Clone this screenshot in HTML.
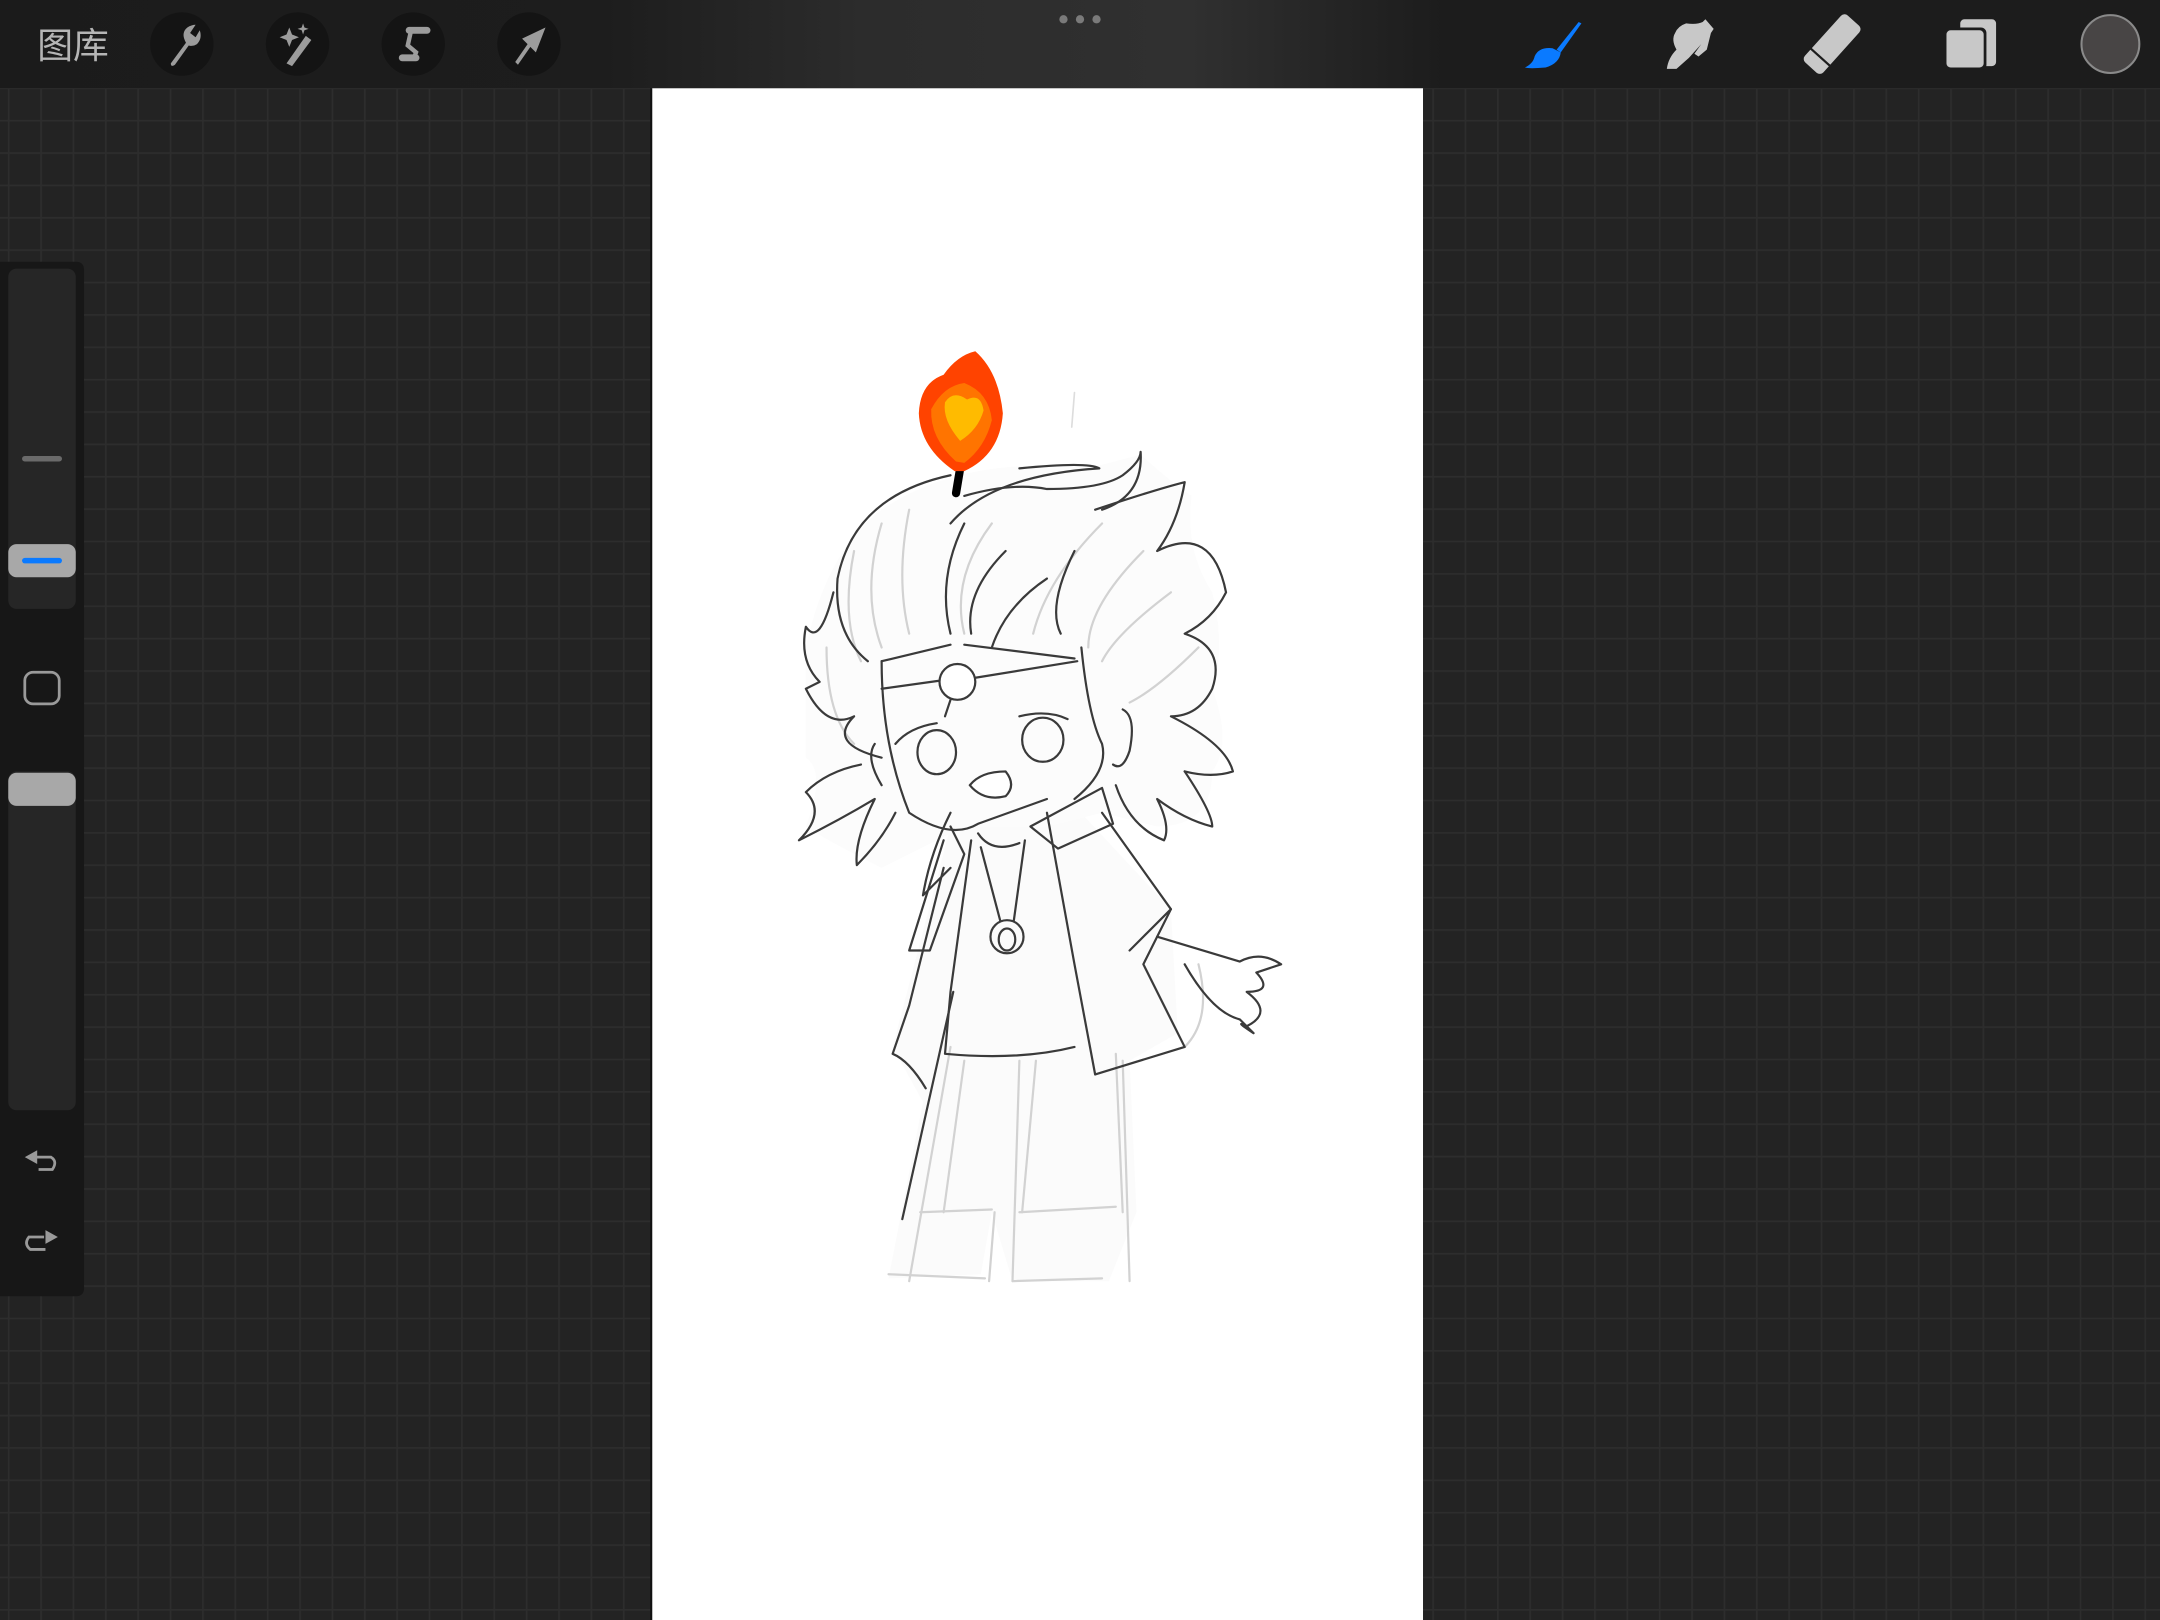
<!DOCTYPE html>
<html><head><meta charset="utf-8"><style>
html,body{margin:0;padding:0;background:#232323;width:2160px;height:1620px;overflow:hidden}
svg{display:block}
</style></head><body>
<svg width="2160" height="1620" viewBox="0 0 1568 1176" xmlns="http://www.w3.org/2000/svg">
<defs>
<pattern id="g" width="23.5" height="23.5" patternUnits="userSpaceOnUse" x="5.7" y="16.5">
<rect width="23.5" height="23.5" fill="#232323"/>
<rect width="1.2" height="23.5" fill="#2d2d2d"/>
<rect width="23.5" height="1.2" fill="#2d2d2d"/>
</pattern>
<linearGradient id="tb" x1="0" x2="1" y1="0" y2="0">
<stop offset="0" stop-color="#1b1b1b"/>
<stop offset="0.28" stop-color="#1d1d1d"/>
<stop offset="0.4" stop-color="#2c2c2c"/>
<stop offset="0.55" stop-color="#303030"/>
<stop offset="0.67" stop-color="#1c1c1c"/>
<stop offset="1" stop-color="#1c1c1c"/>
</linearGradient>
</defs>
<rect width="1568" height="1176" fill="url(#g)"/>
<rect x="473" y="64" width="560" height="1112" fill="#ffffff"/>
<rect x="472" y="64" width="1.5" height="1112" fill="#111"/>

<g fill="none" stroke-linecap="round" stroke-linejoin="round">
<path d="M700 595 L780 585 L850 660 L855 750 L820 770 L825 880 L805 930 L735 930 L720 880 L712 925 L645 928 L670 800 L648 760 L690 600Z" fill="#fbfbfb" stroke="none"/>
<path d="M585 470 Q600 400 640 370 Q700 330 790 340 L828 330 Q850 350 865 360 Q860 400 880 430 Q890 470 880 500 Q895 540 880 560 Q880 600 840 600 L800 590 L760 600 L700 600 L640 630 Q600 610 585 600 Q600 560 585 550Z" fill="#fcfcfc" stroke="none"/>
<g stroke="#d2d2d2" stroke-width="1.6">
<path d="M690 760 L660 930 M722 880 L718 930 M740 770 L735 930 M815 770 L820 930"/>
<path d="M668 880 L720 878 M740 880 L810 876 M645 925 L715 928 M735 930 L800 928"/>
<path d="M700 770 L685 880 M752 770 L742 880 M810 765 L815 880"/>
<path d="M870 700 Q880 740 860 760"/>
<path d="M620 400 Q610 450 625 480 M640 380 Q625 430 640 470 M660 370 Q650 420 660 460 M720 380 Q690 420 700 460 M800 380 Q760 420 750 460 M830 400 Q790 440 790 470 M850 430 Q810 460 800 480 M600 470 Q600 520 620 540 M870 470 Q840 500 820 510"/>
</g>
<g stroke="#3a3a3a" stroke-width="1.6">
<path d="M740 340 Q790 335 798 340 Q720 345 690 380"/>
<path d="M690 345 Q620 360 608 420 Q605 460 630 480"/>
<path d="M700 360 Q735 350 760 355 Q800 355 815 345 Q828 335 828 328 Q830 360 800 370"/>
<path d="M795 370 Q840 355 860 350 Q855 380 840 400 Q880 380 890 430 Q880 450 860 460 Q890 470 880 500 Q870 520 850 520 Q890 540 895 560 Q880 565 860 560"/>
<path d="M860 560 Q880 590 880 600 Q860 595 840 580 Q850 600 845 610 Q820 600 810 570"/>
<path d="M605 430 Q595 470 585 455 Q580 480 595 495 Q585 500 585 500 Q600 530 620 520 Q600 540 640 550"/>
<path d="M625 555 Q600 560 585 575 Q600 590 580 610 Q610 595 635 580 Q620 610 622 628 Q640 610 650 590"/>
<path d="M690 590 Q675 620 670 650 Q680 640 690 630"/>
<path d="M700 380 Q680 420 690 460 M730 400 Q700 430 705 460 M760 420 Q730 440 720 470 M780 400 Q760 440 770 460"/>
<path d="M640 480 Q640 540 660 590 Q690 610 710 598 L760 580"/>
<path d="M640 480 L690 468 M700 468 L780 478 M640 500 L683 494 M708 492 L782 480"/>
<path d="M785 470 Q790 520 800 540 Q805 560 780 580"/>
<circle cx="695" cy="495" r="13" fill="#fff"/>
<path d="M690 508 L686 520"/>
<ellipse cx="680" cy="546" rx="14" ry="16"/>
<ellipse cx="757" cy="537" rx="15" ry="16"/>
<path d="M650 540 Q660 528 680 525 M740 520 Q760 515 775 522"/>
<path d="M704 570 Q712 560 730 560 Q738 570 730 578 Q714 582 704 570Z" fill="#fff"/>
<path d="M815 515 Q825 520 820 545 Q815 560 808 555"/>
<path d="M635 540 Q628 550 640 570"/>
<path d="M748 600 L800 572 L808 598 L768 616Z"/>
<path d="M690 600 L700 620 L675 690 L660 690 L685 610"/>
<path d="M705 610 L690 720 L686 765 Q740 770 780 760"/>
<path d="M760 590 L780 700 L795 780 L860 760 L830 700 L850 660 L800 590"/>
<path d="M685 630 L660 730 L648 765 Q660 770 672 790"/>
<path d="M850 660 L820 690 M840 680 L900 698 Q915 690 930 700 L912 706 Q925 720 905 720 Q925 735 905 745 Q895 740 910 750 L900 740 Q880 735 860 700"/>
<path d="M710 605 Q720 620 740 612"/>
<path d="M712 615 L726 668 M744 610 L736 668"/>
<circle cx="731" cy="680" r="12"/>
<ellipse cx="731" cy="682" rx="6" ry="8"/>
<path d="M692 720 L655 885"/>
</g>
<path d="M780 285 L778 310" stroke="#ddd" stroke-width="1.2"/>
<path d="M697 340 L694 358" stroke="#000" stroke-width="6"/>
<path d="M693 342 Q668 325 667 300 Q668 278 685 272 Q695 258 708 255 Q725 270 728 300 Q726 330 700 342Z" fill="#ff4300"/>
<path d="M694 335 Q675 318 676 297 Q685 280 700 278 Q718 285 720 305 Q715 325 700 336Z" fill="#ff7400"/>
<path d="M697 320 Q684 305 686 292 Q692 283 702 290 Q712 285 714 298 Q710 312 697 320Z" fill="#ffbb00"/>
</g>

<rect width="1568" height="64" fill="url(#tb)"/>
<text x="27" y="42" font-family="Liberation Sans, Noto Sans CJK SC, sans-serif" font-size="26" fill="#b5b5b5">图库</text>
<g fill="#141414">
<ellipse cx="132" cy="32" rx="23" ry="23"/>
<ellipse cx="216" cy="32" rx="23" ry="23"/>
<ellipse cx="300" cy="32" rx="23" ry="23"/>
<ellipse cx="384" cy="32" rx="23" ry="23"/>
</g>
<g fill="#9c9c9c" stroke="none">
<path d="M124 46 L135 31 Q131 24 136 20 Q139 18 142 18 L138 24 L142 27 L145 22 Q147 28 143 32 Q140 34 137 33 L127 47 Q124 49 124 46Z"/>
<path d="M208 46 L222 26 L226 29 L212 48Z"/>
<path d="M210 20 L212 25 L217 27 L212 29 L210 34 L208 29 L203 27 L208 25Z"/>
<path d="M220 17 L221 20 L224 21 L221 22 L220 25 L219 22 L216 21 L219 20Z"/>
<path d="M396 20 L389 38 L385 34 L376 47 L374 45 L383 32 L379 28Z"/>
</g>
<g fill="none" stroke="#9c9c9c" stroke-linecap="round">
<path d="M297 22 L310 22" stroke-width="5"/>
<path d="M298 24 L296 33 L302 38 L301 41" stroke-width="3.2"/>
<path d="M292 42 L302 42" stroke-width="5"/>
</g>
<g fill="#7a7a7a">
<circle cx="772" cy="14" r="3"/><circle cx="784" cy="14" r="3"/><circle cx="796" cy="14" r="3"/>
</g>
<path d="M1130 36 L1146 16 L1148 17 L1133 38Z" fill="#0a7aff"/>
<path d="M1133 38 Q1132 46 1122 49 Q1110 50 1107 49 Q1113 46 1114 41 Q1117 34 1127 35Z" fill="#0a7aff"/>
<path d="M1224 17 Q1232 18 1236 16 L1238 14 L1244 21 L1242 24 L1239 36 L1233 41 L1230 39 L1235 32 L1226 42 L1217 50 L1210 50 Q1211 42 1217 36 Q1213 29 1216 24 Q1218 19 1224 17Z" fill="#c8c8c8"/>
<g transform="rotate(42 1330 32)">
<rect x="1321" y="9" width="18" height="46" rx="3.5" fill="#c8c8c8"/>
<rect x="1319" y="44" width="22" height="1.6" fill="#1c1c1c"/>
</g>
<rect x="1423" y="14" width="26" height="34" rx="3" fill="#c8c8c8"/>
<rect x="1410" y="20" width="32" height="31" rx="4" fill="#1c1c1c"/>
<rect x="1413" y="22" width="27" height="27" rx="3" fill="#c8c8c8"/>
<circle cx="1532" cy="32" r="21" fill="#484545" stroke="#8a8a8a" stroke-width="1.5"/>

<path d="M0 190 L55 190 Q61 190 61 196 L61 935 Q61 941 55 941 L0 941Z" fill="#171717"/>
<rect x="6" y="195" width="49" height="247" rx="6" fill="#262626"/>
<rect x="16" y="331" width="29" height="4" rx="2" fill="#6a6a6a"/>
<rect x="6" y="395" width="49" height="24" rx="6" fill="#a8a8a8"/>
<rect x="16" y="405" width="29" height="4" rx="2" fill="#0a7aff"/>
<rect x="18" y="488" width="25" height="23" rx="6" fill="none" stroke="#9a9a9a" stroke-width="2"/>
<rect x="6" y="560" width="49" height="246" rx="6" fill="#262626"/>
<rect x="6" y="561" width="49" height="24" rx="6" fill="#a8a8a8"/>
<g fill="none" stroke="#9a9a9a" stroke-width="2">
<path d="M26 840 L37 840 Q42 843 38 849 L28 849"/>
<path d="M33 907 L22 907 Q17 903 21 898 L32 898"/>
</g>
<path d="M18 840 L27 835 L27 845Z" fill="#9a9a9a"/>
<path d="M42 898 L33 893 L33 903Z" fill="#9a9a9a"/>
</svg>
</body></html>
